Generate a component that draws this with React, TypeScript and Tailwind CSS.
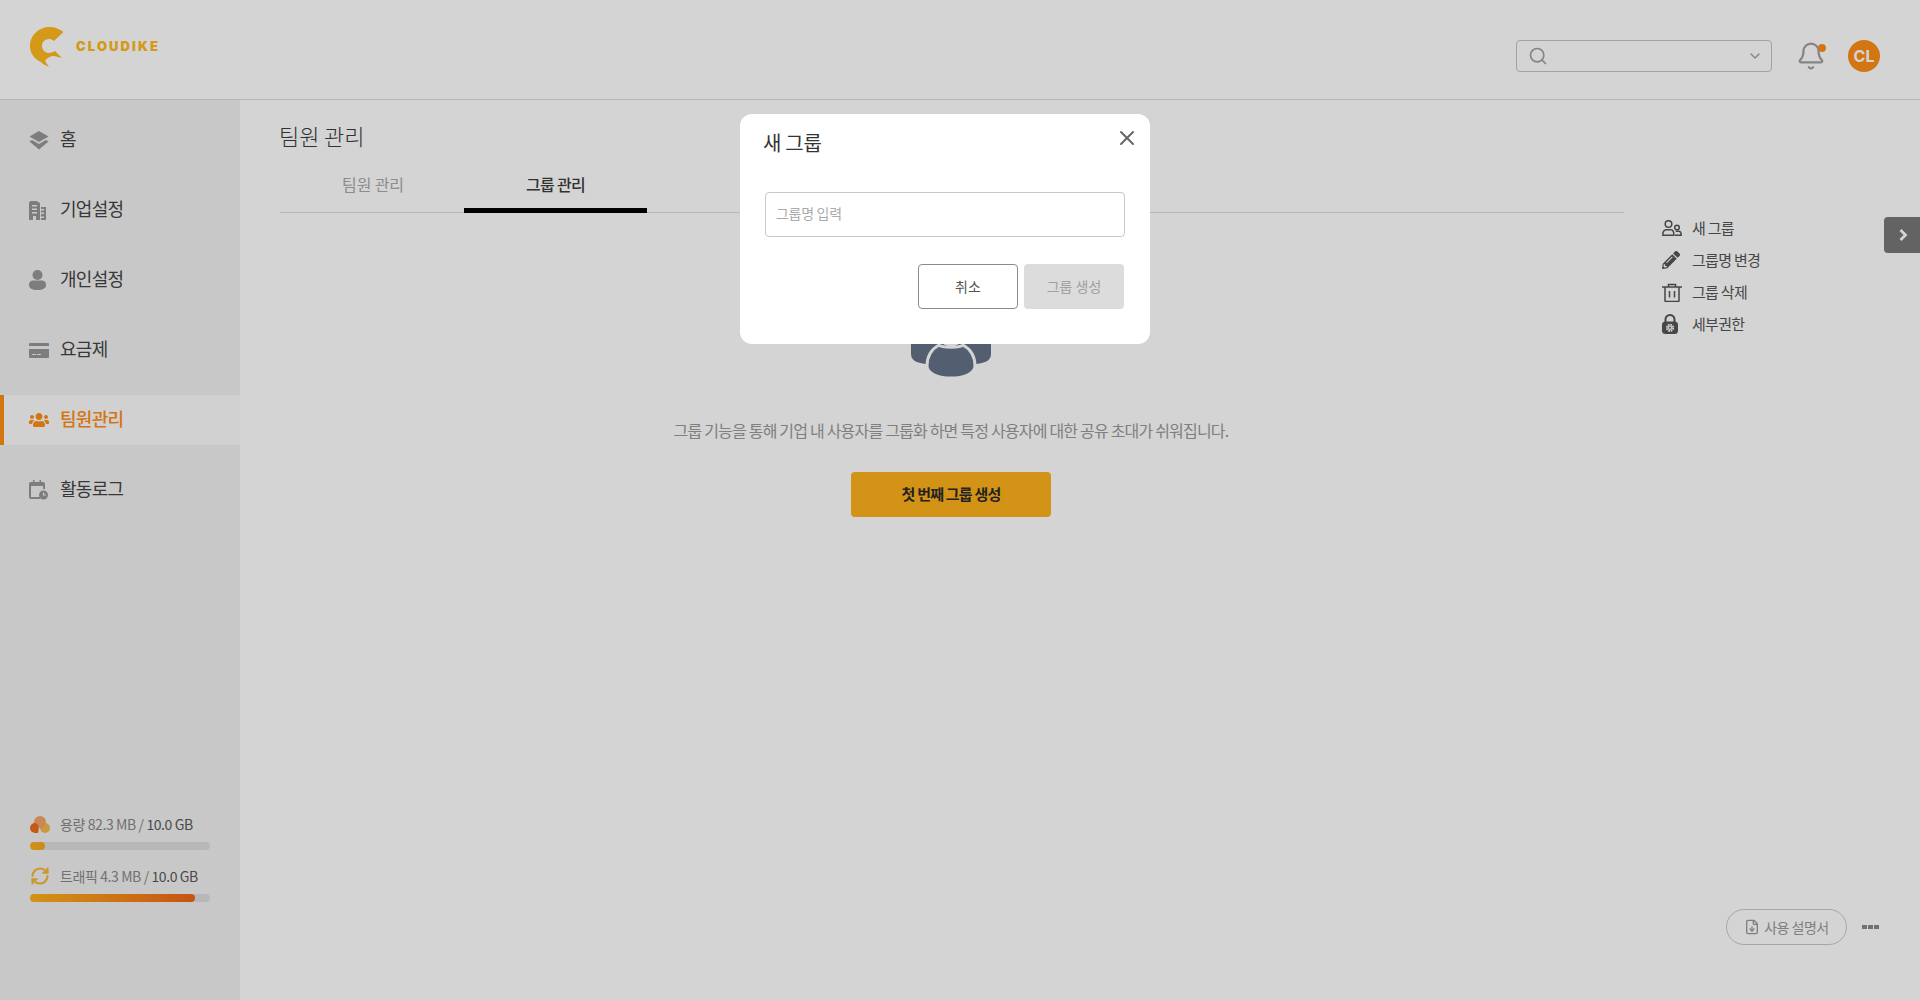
import { Bell, ChevronDown, FileDown, RefreshCw, Search, X } from "lucide-react";
import { FaPencilAlt, FaUsers } from "react-icons/fa";
import type { ReactNode } from "react";

const font = "font-['Noto_Sans_CJK_KR','Noto_Sans',sans-serif]";

function LayersIcon() {
  return (
    <svg width="20" height="19" viewBox="0 0 20 19" fill="#979797">
      <path d="M10 0 19.500 5.500 10 11 .500 5.500Z" />
      <path d="M.500 10.500 3 9l7 4 7-4 2.500 1.500L10 18.500Z" />
    </svg>
  );
}

function BuildingIcon() {
  return (
    <svg width="17" height="19" viewBox="0 0 17 19" fill="#979797">
      <path fillRule="evenodd" d="M0 1.500 1.500 0h6L11 2v17H7v-4H4v4H0ZM3 4v1.500h5V4Zm0 3.500V9h5V7.500Zm0 3.500v1.500h5V11Z" />
      <path d="M12 6h5v13h-5v-2h3v-1.500h-3V13h3v-1.500h-3V9.500h3V8h-3Z" />
    </svg>
  );
}

function UserIcon() {
  return (
    <svg width="17" height="20" viewBox="0 0 17 20" fill="#979797">
      <circle cx="8.500" cy="5" r="5" />
      <path d="M0 15c0-3.500 2.500-4.500 4-4.500h9c1.500 0 4 1 4 4.500 0 3.500-3 5-8.500 5S0 18.500 0 15Z" />
    </svg>
  );
}

function CardIcon() {
  return (
    <svg width="20" height="15" viewBox="0 0 20 15" fill="#979797">
      <path d="M1 0h18a1 1 0 0 1 1 1v2H0V1a1 1 0 0 1 1-1Z" />
      <path fillRule="evenodd" d="M0 6h20v8a1 1 0 0 1-1 1H1a1 1 0 0 1-1-1Zm3 5v1h4v-1Zm5 0v1h4v-1Z" />
    </svg>
  );
}

function CalendarClockIcon() {
  return (
    <svg width="19" height="20" viewBox="0 0 19 20" fill="none">
      <path d="M11 18H2a1 1 0 0 1-1-1V4a1 1 0 0 1 1-1h12a1 1 0 0 1 1 1v5" stroke="#979797" strokeWidth="2" />
      <path d="M1 4h14v2H1Z" fill="#979797" />
      <path d="M4 0h1.500v4H4ZM10.500 0H12v4h-1.500Z" fill="#979797" />
      <circle cx="14.500" cy="15" r="4.500" fill="#979797" />
      <path d="M14.500 12.500V15h2.500" stroke="#f1f1f1" strokeWidth="1.200" />
    </svg>
  );
}

function GroupIcon() {
  return (
    <svg width="20" height="16" viewBox="0 0 20 16" fill="none" stroke="#555" strokeWidth="1.500">
      <circle cx="6.500" cy="4" r="3.300" />
      <path d="M.800 15.200c0-3.500 1.500-5.400 3.500-5.400h4.600c1.500 0 3 1.400 3 5.400Z" />
      <circle cx="15" cy="7.500" r="2.300" />
      <path d="M13 15.200h6.200c0-2.500-1-3.900-2.500-3.900h-3" />
    </svg>
  );
}

function TrashIcon() {
  return (
    <svg width="20" height="19" viewBox="0 0 20 19" fill="none" stroke="#555" strokeWidth="1.500">
      <path d="M0 4h20" />
      <path d="M6.500 4V1.500h7V4" />
      <path d="M3 4v13.500a1 1 0 0 0 1 1h12a1 1 0 0 0 1-1V4" />
      <path d="M7.500 8v6.500M12.500 8v6.500" />
    </svg>
  );
}

function GearLockIcon() {
  return (
    <svg width="16" height="20" viewBox="0 0 16 20" fill="none">
      <path d="M3.500 9V5.500a4.500 4.500 0 0 1 9 0V9" stroke="#555" strokeWidth="2" />
      <rect y="7.500" width="16" height="12.500" rx="3.500" fill="#555" />
      <circle cx="8" cy="13.800" r="3.200" fill="none" stroke="#fff" strokeWidth="1.800" strokeDasharray="1.700 .8" />
      <circle cx="8" cy="13.800" r="2.200" fill="#fff" />
      <circle cx="8" cy="13.800" r="1" fill="#555" />
    </svg>
  );
}

function EmptyGroupIcon() {
  return (
    <svg className="mt-[105px]" width="80" height="60" viewBox="0 0 80 60">
      <path d="M0 20h80v16c0 6-5 9-15 10H15C5 45 0 42 0 36Z" fill="#647389" />
      <circle cx="40" cy="15" r="12" fill="#647389" stroke="#fff" strokeWidth="3" />
      <path d="M28 27c-9 5-12 13-12 21 0 8 12 12 24 12s24-4 24-12c0-8-3-16-12-21-3 3-21 3-24 0Z" fill="#647389" stroke="#fff" strokeWidth="3" />
    </svg>
  );
}

function Logo() {
  return (
    <svg width="34" height="41" viewBox="0 0 34 41">
      <path
        d="M20 0c5 0 10 2 13.500 5L24 14c-2-1.500-3.500-2-5-2-4 0-7 3-7 7 0 3 2 6 6 7 3 0 5-1 7-2l7 7c-3-1-5-1-8-2-4 0-7 2-9 5l4 6-6-3-2-2C4 32 0 26 0 19 0 8 9 0 20 0Z"
        fill="#ffb91d"
      />
    </svg>
  );
}

const navItems: { label: string; icon: ReactNode; active?: boolean }[] = [
  { label: "홈", icon: <LayersIcon /> },
  { label: "기업설정", icon: <BuildingIcon /> },
  { label: "개인설정", icon: <UserIcon /> },
  { label: "요금제", icon: <CardIcon /> },
  { label: "팀원관리", icon: <FaUsers size={20} color="#ff8d18" />, active: true },
  { label: "활동로그", icon: <CalendarClockIcon /> },
];

const actions: { label: string; icon: ReactNode }[] = [
  { label: "새 그룹", icon: <GroupIcon /> },
  { label: "그룹명 변경", icon: <FaPencilAlt size={18} color="#555" /> },
  { label: "그룹 삭제", icon: <TrashIcon /> },
  { label: "세부권한", icon: <GearLockIcon /> },
];

export default function App() {
  return (
    <div className={`relative h-[1000px] overflow-hidden bg-white ${font}`}>
      <header className="flex h-[100px] items-start justify-between border-b border-[#dcdcdc] pl-[30px] pr-10">
        <div className="mt-[27px] flex items-center gap-[12px]">
          <Logo />
          <span className="mt-[-2px] font-['Inter',sans-serif] text-[13px] font-black tracking-[2.1px] text-[#ffb91d]">CLOUDIKE</span>
        </div>
        <div className="mt-10 flex items-center">
          <div className="flex h-8 w-[256px] items-center justify-between rounded border border-[#c4c4c4] pl-[11px] pr-[8px]">
            <Search size={20} color="#a0a0a0" strokeWidth={2} />
            <ChevronDown size={16} color="#a0a0a0" strokeWidth={2} />
          </div>
          <div className="relative ml-[24px] mr-[22px]">
            <Bell size={30} color="#a0a0a0" strokeWidth={1.8} />
            <span className="absolute right-0 top-[3px] h-2 w-2 rounded-full bg-[#ff8d18]"></span>
          </div>
          <div className="flex h-8 w-8 items-center justify-center rounded-full bg-[#ff8d18] font-['Inter',sans-serif] text-[16px] font-bold text-white">CL</div>
        </div>
      </header>

      <div className="flex h-[900px]">
        <aside className="flex w-[240px] flex-col justify-between bg-[#f1f1f1] pb-[98px] pt-[15px]">
          <nav className="flex flex-col gap-5">
            {navItems.map((item) => (
              <div
                key={item.label}
                className={`flex h-[50px] items-center border-l-4 pl-[25px] ${item.active ? "border-[#ff8d18] bg-[#fcfcfc]" : "border-transparent"}`}
              >
                <span className="flex w-[31px] items-center">{item.icon}</span>
                <span className={`pb-[3px] text-[18px] tracking-[-0.7px] ${item.active ? "font-medium text-[#ff8d18]" : "text-[#444]"}`}>{item.label}</span>
              </div>
            ))}
          </nav>
          <div className="flex flex-col gap-[16px] px-[30px] text-[14px] leading-5 tracking-[-0.4px] text-[#888]">
            <div>
              <div className="flex items-center gap-[10px]">
                <svg width="20" height="17" viewBox="0 0 20 17">
                  <circle cx="15" cy="12" r="5" fill="#f2ba4b" />
                  <circle cx="10" cy="6" r="6" fill="#f0a569" />
                  <path d="M8 17H5a5 5 0 0 1 0-10c3 0 5 4 3 10Z" fill="#ed6c1e" />
                </svg>
                <span>
                  용량 82.3 MB / <span className="text-[#5a5a5a]">10.0 GB</span>
                </span>
              </div>
              <div className="mt-[8px] h-2 rounded-full bg-[#dedede]">
                <div className="h-2 w-[15px] rounded-full bg-gradient-to-r from-[#fdb11b] to-[#f5a623]"></div>
              </div>
            </div>
            <div>
              <div className="flex items-center gap-[10px]">
                <RefreshCw size={20} color="#f5b53c" strokeWidth={2.6} />
                <span>
                  트래픽 4.3 MB / <span className="text-[#5a5a5a]">10.0 GB</span>
                </span>
              </div>
              <div className="mt-[8px] h-2 rounded-full bg-[#dedede]">
                <div className="h-2 w-[165px] rounded-full bg-gradient-to-r from-[#fdb11b] to-[#ee6518]"></div>
              </div>
            </div>
          </div>
        </aside>

        <main className="flex flex-1 pl-10">
          <div className="w-[1344px]">
            <h1 className="ml-[-1px] mt-[19px] h-[33px] text-[22px] font-light leading-[33px] tracking-[-0.1px] text-[#3d3d3d]">팀원 관리</h1>
            <div className="mt-[4px] flex h-[57px] border-b border-[#dcdcdc]">
              <div className="flex h-[57px] w-[184px] items-center justify-center pb-[1px] pl-[2px] text-[16px] tracking-[-0.1px] text-[#aaa]">팀원 관리</div>
              <div className="flex h-[57px] w-[183px] items-center justify-center border-b-[5px] border-black pt-[3px] text-[16px] font-medium tracking-[-0.7px] text-[#3d3d3d]">그룹 관리</div>
            </div>
            <div className="mr-[2px] flex flex-col items-center">
              <EmptyGroupIcon />
              <p className="mt-[41px] text-[16px] leading-[22px] tracking-[-0.8px] text-[#999]">그룹 기능을 통해 기업 내 사용자를 그룹화 하면 특정 사용자에 대한 공유 초대가 쉬워집니다.</p>
              <button className="mt-[31px] flex h-[45px] w-[200px] items-center justify-center rounded bg-[#fdb11b] text-[15px] font-bold tracking-[-0.8px] text-[#2a2a2a]">첫 번째 그룹 생성</button>
            </div>
          </div>
          <ul className="ml-[38px] mt-[112px] flex flex-col">
            {actions.map((a) => (
              <li key={a.label} className="flex h-8 items-center text-[15px] tracking-[-0.7px] text-[#555]">
                <span className="flex w-[30px] items-center">{a.icon}</span>
                {a.label}
              </li>
            ))}
          </ul>
        </main>
      </div>

      <button className="absolute right-0 top-[217px] flex h-[36px] w-[36px] items-center justify-center rounded-l-sm bg-[#777] pl-[2px]">
        <svg width="9" height="12" viewBox="0 0 9 12" fill="none" stroke="#fff" strokeWidth="2.800">
          <path d="M1.500 1 6.500 6l-5 5" />
        </svg>
      </button>

      <div className="absolute left-[1726px] top-[909px] flex h-[36px] w-[121px] items-center justify-center gap-1 rounded-full border border-[#c8c8c8] text-[14px] tracking-[-0.5px] text-[#999]">
        <FileDown size={16} color="#999" />
        사용 설명서
      </div>
      <div className="absolute left-[1862px] top-[925px] flex gap-[1px]">
        <span className="h-1 w-[5px] bg-[#888]"></span>
        <span className="h-1 w-[5px] bg-[#888]"></span>
        <span className="h-1 w-[5px] bg-[#888]"></span>
      </div>

      <div className="absolute inset-0 bg-black/[0.17]"></div>

      <div className="absolute left-[740px] top-[114px] h-[230px] w-[410px] rounded-xl bg-white px-[25px] pt-[16px]">
        <div className="flex items-start justify-between">
          <h2 className="ml-[-2px] h-[27px] text-[20px] leading-[25px] tracking-[-0.3px] text-[#333]">새 그룹</h2>
          <X className="mr-[-14px] mt-[-4px]" size={24} color="#666" strokeWidth={2} />
        </div>
        <input
          readOnly
          placeholder="그룹명 입력"
          className="mt-[35px] h-[45px] w-[360px] rounded border border-[#c8c8c8] px-[10px] pb-[3px] text-[14px] tracking-[-0.3px] text-[#333] outline-none placeholder:text-[#aaa]"
        />
        <div className="mt-[27px] flex justify-end gap-[6px] pr-[1px]">
          <button className="h-[45px] w-[100px] rounded-sm border border-[#8a8a8a] bg-white text-[14px] text-[#555]">취소</button>
          <button className="h-[45px] w-[100px] rounded-sm bg-[#dcdcdc] text-[14px] text-[#a0a0a0]">그룹 생성</button>
        </div>
      </div>
    </div>
  );
}
